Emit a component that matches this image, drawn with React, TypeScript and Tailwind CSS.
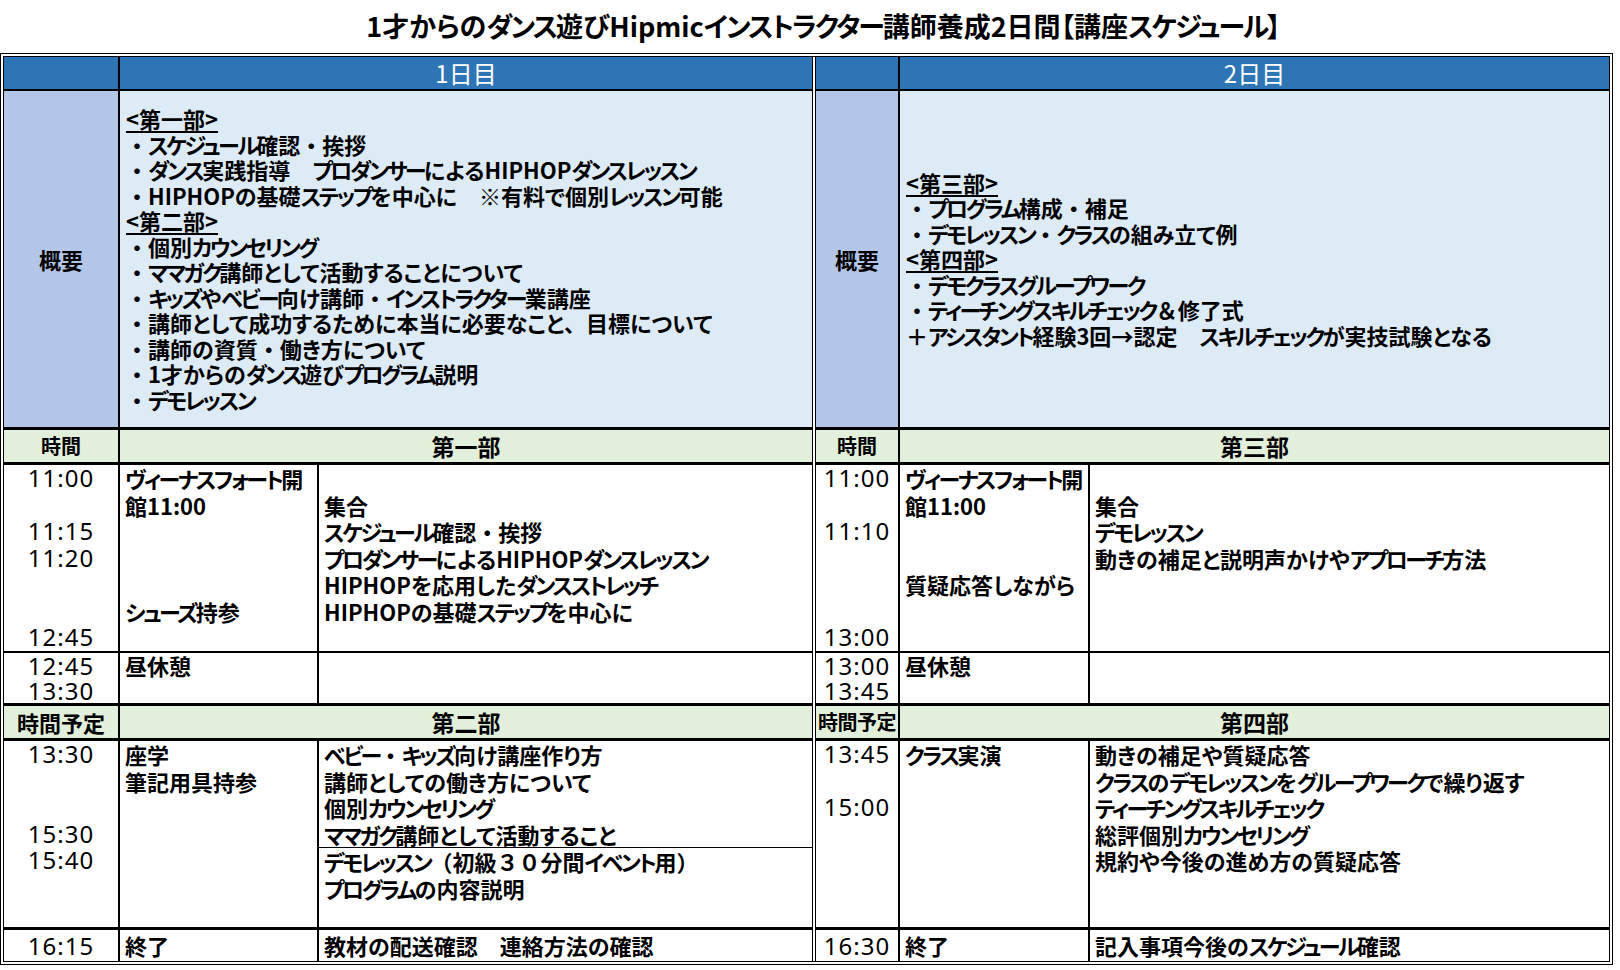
import React from "react";

type Block = string[];

interface Section {
  times: string[];
  col2: string[];
  col3: Block[];
}

interface Day {
  day: string;
  c1: string;
  c2: string;
  timeLabel2: string;
  timeLabel2Size: string;
  part1: string;
  part2: string;
  overview: string[];
  s1: Section;
  lunch: Section;
  s2: Section;
  last: [string, string, string];
}

const JP = "font-['Noto_Sans_CJK_JP',sans-serif]";
const NUM = "font-['Noto_Sans','Noto_Sans_CJK_JP',sans-serif]";

const days: Day[] = [
  {
    day: "1日目",
    c1: "w-[116px]",
    c2: "w-[199px]",
    timeLabel2: "時間予定",
    timeLabel2Size: "text-[22px]",
    part1: "第一部",
    part2: "第二部",
    overview: [
      "<第一部>",
      "・スケジュール確認・挨拶",
      "・ダンス実践指導　プロダンサーによるHIPHOPダンスレッスン",
      "・HIPHOPの基礎ステップを中心に　※有料で個別レッスン可能",
      "<第二部>",
      "・個別カウンセリング",
      "・ママガク講師として活動することについて",
      "・キッズやベビー向け講師・インストラクター業講座",
      "・講師として成功するために本当に必要なこと、目標について",
      "・講師の資質・働き方について",
      "・1才からのダンス遊びプログラム説明",
      "・デモレッスン",
    ],
    s1: {
      times: ["11:00", "", "11:15", "11:20", "", "", "12:45"],
      col2: ["ヴィーナスフォート開", "館11:00", "", "", "", "シューズ持参", ""],
      col3: [
        [
          "",
          "集合",
          "スケジュール確認・挨拶",
          "プロダンサーによるHIPHOPダンスレッスン",
          "HIPHOPを応用したダンスストレッチ",
          "HIPHOPの基礎ステップを中心に",
          "",
        ],
      ],
    },
    lunch: { times: ["12:45", "13:30"], col2: ["昼休憩", ""], col3: [["", ""]] },
    s2: {
      times: ["13:30", "", "", "15:30", "15:40", "", ""],
      col2: ["座学", "筆記用具持参", "", "", "", "", ""],
      col3: [
        ["ベビー・キッズ向け講座作り方", "講師としての働き方について", "個別カウンセリング", "ママガク講師として活動すること"],
        ["デモレッスン（初級３０分間イベント用）", "プログラムの内容説明", ""],
      ],
    },
    last: ["16:15", "終了", "教材の配送確認　連絡方法の確認"],
  },
  {
    day: "2日目",
    c1: "w-[84px]",
    c2: "w-[190px]",
    timeLabel2: "時間予定",
    timeLabel2Size: "text-[20px] tracking-[-0.5px]",
    part1: "第三部",
    part2: "第四部",
    overview: [
      "<第三部>",
      "・プログラム構成・補足",
      "・デモレッスン・クラスの組み立て例",
      "<第四部>",
      "・デモクラスグループワーク",
      "・ティーチングスキルチェック＆修了式",
      "＋アシスタント経験3回→認定　スキルチェックが実技試験となる",
    ],
    s1: {
      times: ["11:00", "", "11:10", "", "", "", "13:00"],
      col2: ["ヴィーナスフォート開", "館11:00", "", "", "質疑応答しながら", "", ""],
      col3: [["", "集合", "デモレッスン", "動きの補足と説明声かけやアプローチ方法", "", "", ""]],
    },
    lunch: { times: ["13:00", "13:45"], col2: ["昼休憩", ""], col3: [["", ""]] },
    s2: {
      times: ["13:45", "", "15:00", "", "", "", ""],
      col2: ["クラス実演", "", "", "", "", "", ""],
      col3: [
        [
          "動きの補足や質疑応答",
          "クラスのデモレッスンをグループワークで繰り返す",
          "ティーチングスキルチェック",
          "総評個別カウンセリング",
          "規約や今後の進め方の質疑応答",
          "",
          "",
        ],
      ],
    },
    last: ["16:30", "終了", "記入事項今後のスケジュール確認"],
  },
];

const FULL = /^[・、（）＆＋※→０-９]$/;
const KANA = /^[ァ-ヺー]+$/;

// palt everywhere; marks stay full width, katakana runs are squeezed like the narrow UI font
function Jp({ text, kana = "tracking-[-2.5px]" }: { text: string; kana?: string }) {
  const parts = text.split(/([・、（）＆＋※→０-９]|[ァ-ヺー]+)/).filter((p) => p !== "");
  return (
    <>
      {parts.map((p, i) => {
        if (FULL.test(p)) {
          return (
            <span key={i} className="[font-feature-settings:normal]">
              {p}
            </span>
          );
        }
        if (KANA.test(p)) {
          return (
            <span key={i} className={kana}>
              {p}
            </span>
          );
        }
        return <React.Fragment key={i}>{p}</React.Fragment>;
      })}
    </>
  );
}

function Line({ text, tall, time }: { text: string; tall: boolean; time?: boolean }) {
  const h = tall ? "h-[26.57px] leading-[26.57px]" : "h-[25px] leading-[25px]";
  if (time) {
    return (
      <div className={`${h} ${NUM} font-normal text-center text-[24px] tracking-[1px] whitespace-nowrap`}>
        {text || "\u00a0"}
      </div>
    );
  }
  return <div className={`${h} whitespace-nowrap`}>{text ? <Jp text={text} /> : "\u00a0"}</div>;
}

function SectionRows({ d, s, tall, bottom }: { d: Day; s: Section; tall: boolean; bottom: string }) {
  return (
    <div className={`flex ${bottom} border-black bg-white`}>
      <div className={`${d.c1} shrink-0 border-r-2 border-black`}>
        {s.times.map((t, i) => (
          <Line key={i} text={t} tall={tall} time />
        ))}
      </div>
      <div className={`${d.c2} shrink-0 border-r-2 border-black pl-[5px]`}>
        {s.col2.map((t, i) => (
          <Line key={i} text={t} tall={tall} />
        ))}
      </div>
      <div className="flex-1 min-w-0 flex flex-col">
        {s.col3.map((b, bi) => (
          <div
            key={bi}
            className={`pl-[5px] ${bi < s.col3.length - 1 ? "border-b border-black" : ""}`}
          >
            {b.map((t, i) => (
              <Line key={i} text={t} tall={tall} />
            ))}
          </div>
        ))}
      </div>
    </div>
  );
}

function GreenHeader({ d, label, part, labelSize }: { d: Day; label: string; part: string; labelSize: string }) {
  return (
    <div className="flex h-[35px] border-b-[3px] border-black bg-[#e2efda]">
      <div
        className={`${d.c1} shrink-0 border-r-2 border-black flex items-center justify-center whitespace-nowrap ${labelSize}`}
      >
        {label}
      </div>
      <div className="flex-1 flex items-center justify-center text-[23px]">{part}</div>
    </div>
  );
}

function DayTable({ d, right }: { d: Day; right?: boolean }) {
  return (
    <div
      className={`flex flex-col ${right ? "flex-1 border-l-4 border-double border-black" : "w-[808px] shrink-0"}`}
    >
      {/* day header */}
      <div className="flex h-[34px] border-b-2 border-black bg-[#2e75b6]">
        <div className={`${d.c1} shrink-0 border-r-2 border-black`} />
        <div className="flex-1 flex items-center justify-center text-white text-[24px] font-normal">
          {d.day}
        </div>
      </div>

      {/* overview */}
      <div className="flex h-[339px] border-b-[3px] border-black">
        <div
          className={`${d.c1} shrink-0 border-r-2 border-black bg-[#b4c6e7] flex items-center justify-center text-[22px]`}
        >
          概要
        </div>
        <div className="flex-1 bg-[#ddebf7] flex flex-col justify-center pl-[6px]">
          {d.overview.map((t, i) => (
            <div
              key={i}
              className={`h-[25.5px] leading-[25.5px] whitespace-nowrap ${t.startsWith("<") ? "underline underline-offset-[3px] decoration-[1.5px]" : ""}`}
            >
              <Jp text={t} />
            </div>
          ))}
        </div>
      </div>

      <GreenHeader d={d} label="時間" part={d.part1} labelSize="text-[20px]" />
      <SectionRows d={d} s={d.s1} tall bottom="border-b-2 h-[188px]" />
      <SectionRows d={d} s={d.lunch} tall={false} bottom="border-b-[3px] h-[53px]" />
      <GreenHeader d={d} label={d.timeLabel2} part={d.part2} labelSize={d.timeLabel2Size} />
      <SectionRows d={d} s={d.s2} tall bottom="border-b-[3px] h-[189px]" />

      {/* closing row */}
      <div className="flex h-[31px] bg-white">
        <div className={`${d.c1} shrink-0 border-r-2 border-black`}>
          <div className={`h-[31px] leading-[31px] ${NUM} font-normal text-center text-[24px] tracking-[1px]`}>
            {d.last[0]}
          </div>
        </div>
        <div className={`${d.c2} shrink-0 border-r-2 border-black pl-[5px] leading-[31px]`}>{d.last[1]}</div>
        <div className="flex-1 pl-[5px] leading-[31px] whitespace-nowrap">
          <Jp text={d.last[2]} />
        </div>
      </div>
    </div>
  );
}

export default function App() {
  return (
    <div
      className={`w-[1620px] h-[970px] bg-white text-black ${JP} font-bold [font-feature-settings:'palt']`}
    >
      <div className="w-[1613px] h-[53px] pl-[34px] flex items-center justify-center text-[27px] whitespace-nowrap">
        <Jp
          text="1才からのダンス遊びHipmicインストラクター講師養成2日間【講座スケジュール】"
          kana="tracking-[-2px]"
        />
      </div>
      <div className="w-[1613px] border-4 border-double border-black flex text-[22px]">
        <DayTable d={days[0]} />
        <DayTable d={days[1]} right />
      </div>
    </div>
  );
}
